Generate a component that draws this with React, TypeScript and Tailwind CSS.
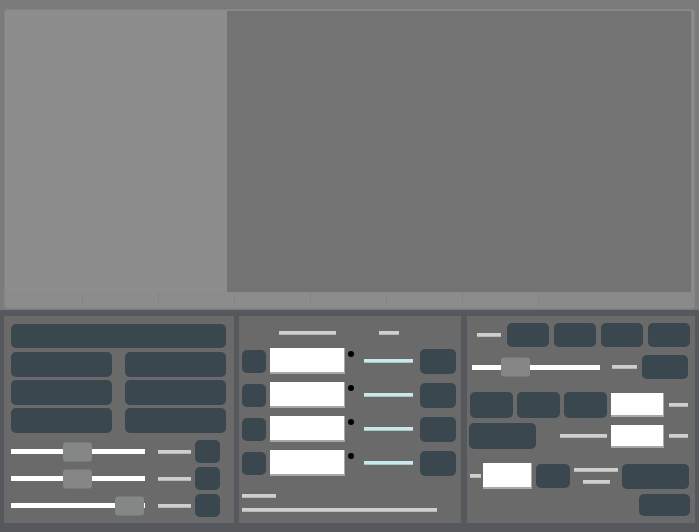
import React from 'react';

const btn = 'bg-[#3a474e] rounded-[5px]';
const bar = 'bg-[#cfcfcf] h-[4px] border-b border-[#b8b8b8]';
const box = 'bg-white border-b-2 border-r border-[#a8a8a8]';

function Slider({ width, thumb }: { width: number; thumb: number }) {
  return (
    <div className="relative h-[5px] bg-white" style={{ width }}>
      <div
        className="absolute top-1/2 -translate-y-1/2 w-[29px] h-[19px] rounded-[3px] bg-[#858786]"
        style={{ left: thumb }}
      />
    </div>
  );
}

function LeftPanel() {
  const sliders = [52, 52, 104];
  return (
    <div className="w-[230px] bg-[#6a6a6a] pl-[7px] pt-[8px] flex flex-col">
      <div className={`${btn} w-[215px] h-[24px]`} />
      <div className="grid grid-cols-[101px_101px] gap-x-[13px] gap-y-[3px] mt-[4px]">
        {Array.from({ length: 6 }).map((_, i) => (
          <div key={i} className={`${btn} h-[25px]`} />
        ))}
      </div>
      <div className="flex flex-col gap-[4px] mt-[7px]">
        {sliders.map((t, i) => (
          <div key={i} className="flex items-center h-[23px]">
            <Slider width={134} thumb={t} />
            <div className={`${bar} w-[33px] ml-[13px]`} />
            <div className={`${btn} w-[25px] h-[23px] ml-[4px]`} />
          </div>
        ))}
      </div>
    </div>
  );
}

function MiddlePanel() {
  return (
    <div className="w-[222px] bg-[#6a6a6a] flex flex-col pt-[15px]">
      <div className="flex h-[4px]">
        <div className={`${bar} w-[57px] ml-[40px]`} />
        <div className={`${bar} w-[20px] ml-[43px]`} />
      </div>
      <div className="flex flex-col gap-[8px] mt-[13px] pl-[3px]">
        {[0, 1, 2, 3].map((i) => (
          <div key={i} className="flex items-center h-[26px]">
            <div className={`${btn} w-[24px] h-[23px]`} />
            <div className={`${box} w-[75px] h-[26px] ml-[4px]`} />
            <div className="self-start mt-[3px] w-[6px] h-[6px] rounded-full bg-black ml-[3px]" />
            <div className="w-[49px] h-[4px] bg-[#c9e8ec] border-b border-[#a9c4c8] ml-[10px]" />
            <div className={`${btn} w-[36px] h-[25px] ml-[7px]`} />
          </div>
        ))}
      </div>
      <div className={`${bar} w-[34px] ml-[3px] mt-[18px]`} />
      <div className={`${bar} w-[195px] ml-[3px] mt-[10px]`} />
    </div>
  );
}

function RightPanel() {
  return (
    <div className="w-[228px] ml-[1px] bg-[#6a6a6a] flex flex-col pt-[7px]">
      <div className="flex items-center h-[24px]">
        <div className={`${bar} w-[24px] ml-[10px]`} />
        <div className="flex gap-[5px] ml-[6px]">
          {[0, 1, 2, 3].map((i) => (
            <div key={i} className={`${btn} w-[42px] h-[24px]`} />
          ))}
        </div>
      </div>
      <div className="flex items-center h-[24px] mt-[8px] pl-[5px]">
        <Slider width={128} thumb={29} />
        <div className={`${bar} w-[25px] ml-[12px]`} />
        <div className={`${btn} w-[46px] h-[24px] ml-[5px]`} />
      </div>
      <div className="flex items-center h-[26px] mt-[13px] pl-[3px]">
        <div className={`${btn} w-[43px] h-[26px]`} />
        <div className={`${btn} w-[43px] h-[26px] ml-[4px]`} />
        <div className={`${btn} w-[43px] h-[26px] ml-[4px]`} />
        <div className={`${box} w-[53px] h-[24px] ml-[4px]`} />
        <div className={`${bar} w-[19px] ml-[5px]`} />
      </div>
      <div className="flex items-center h-[26px] mt-[5px] pl-[2px]">
        <div className={`${btn} w-[67px] h-[26px]`} />
        <div className={`${bar} w-[47px] ml-[24px]`} />
        <div className={`${box} w-[53px] h-[23px] ml-[4px]`} />
        <div className={`${bar} w-[19px] ml-[5px]`} />
      </div>
      <div className="flex items-center h-[26px] mt-[14px] pl-[3px]">
        <div className={`${bar} w-[11px]`} />
        <div className={`${box} w-[49px] h-[26px] ml-[2px]`} />
        <div className={`${btn} w-[34px] h-[24px] ml-[4px]`} />
        <div className="flex flex-col items-center gap-[8px] ml-[4px] w-[44px]">
          <div className={`${bar} w-[44px]`} />
          <div className={`${bar} w-[27px]`} />
        </div>
        <div className={`${btn} w-[67px] h-[25px] ml-[4px]`} />
      </div>
      <div className="flex justify-end pr-[5px] mt-[5px]">
        <div className={`${btn} w-[51px] h-[22px]`} />
      </div>
    </div>
  );
}

export default function App() {
  return (
    <div className="w-[699px] h-[532px] flex flex-col overflow-hidden">
      <div className="h-[310px] bg-[#7b7b7b] pt-[9px] px-[4px]">
        <div className="h-[300px] rounded-[3px] border border-[#858585] bg-[#8a8a8a] flex flex-col pr-[3px] pt-[1px]">
          <div className="flex h-[281px]">
            <div className="w-[222px] bg-[#8d8d8d]" />
            <div className="flex-1 bg-[#737373]" />
          </div>
          <div className="flex h-[15px] pl-[2px] pt-[1px]">
            {Array.from({ length: 7 }).map((_, i) => (
              <div key={i} className="w-[76px] h-[13px] bg-[#8c8c8c] border-r border-[#848484]" />
            ))}
          </div>
        </div>
      </div>
      <div className="flex-1 bg-[#55595d] flex pl-[4px] pt-[6px] pb-[9px] gap-[5px]">
        <LeftPanel />
        <MiddlePanel />
        <RightPanel />
      </div>
    </div>
  );
}
